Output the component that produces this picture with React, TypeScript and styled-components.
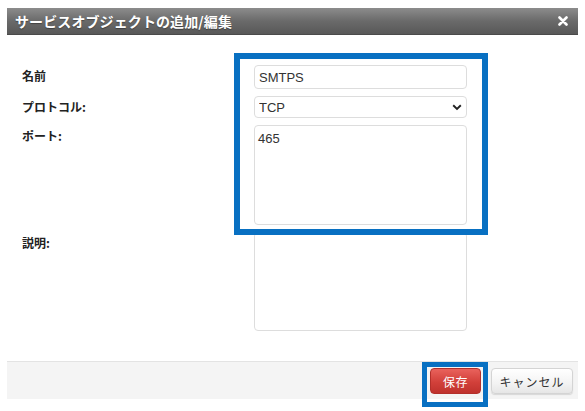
import styled, { createGlobalStyle } from 'styled-components';

const GlobalStyle = createGlobalStyle`
    body {
        margin: 0;
        min-height: 411px;
        background: #ffffff;
        font-family: 'Liberation Sans', Arial, 'Noto Sans CJK JP', sans-serif;
        color: #333333;
    }
    #root {
        min-height: 411px;
    }
`;

type FieldProps = {
    label: string;
    children: React.ReactNode;
};

const Field = ({ label, children }: FieldProps) => (
    <>
        <Label>{label}</Label>
        <Control>{children}</Control>
    </>
);

const App = () => {
    return (
        <>
            <GlobalStyle />
            <Dialog>
                <Header>
                    <h1>サービスオブジェクトの追加/編集</h1>
                    <CloseButton aria-label="close">
                        <svg width="10" height="10" viewBox="0 0 10 10">
                            <path
                                d="M1.5 1.5 L8.5 8.5 M8.5 1.5 L1.5 8.5"
                                stroke="#ffffff"
                                strokeWidth="2.6"
                                strokeLinecap="round"
                            />
                        </svg>
                    </CloseButton>
                </Header>
                <Body>
                    <Field label="名前">
                        <TextInput defaultValue="SMTPS" />
                    </Field>
                    <Field label="プロトコル:">
                        <SelectWrap>
                            <Select defaultValue="TCP">
                                <option>TCP</option>
                                <option>UDP</option>
                            </Select>
                            {/* chevron drawn on top of the select */}
                            <svg width="10" height="7" viewBox="0 0 10 7">
                                <path
                                    d="M1.2 1.3 L5 5 L8.8 1.3"
                                    fill="none"
                                    stroke="#222222"
                                    strokeWidth="1.9"
                                />
                            </svg>
                        </SelectWrap>
                    </Field>
                    <Field label="ポート:">
                        <TextArea $height={100} defaultValue="465" />
                    </Field>
                    <Field label="説明:">
                        <TextArea $height={99} defaultValue="" />
                    </Field>
                </Body>
                <Footer>
                    <Button $variant="primary" $width={51}>
                        保存
                    </Button>
                    <Button $variant="default" $width={82}>
                        キャンセル
                    </Button>
                </Footer>
                {/* annotation boxes */}
                <Highlight $left={227} $top={45} $width={254} $height={182} $border={6} />
                <Highlight $left={415} $top={354} $width={66} $height={45} $border={5} />
            </Dialog>
        </>
    );
};

const Dialog = styled.div`
    position: relative;
    width: 571px;
    margin: 8px 0 0 7px;
    background: #ffffff;
`;

const Header = styled.div`
    height: 27px;
    display: flex;
    align-items: center;
    justify-content: space-between;
    padding: 0 10px 0 8px;
    box-sizing: border-box;
    background: linear-gradient(#8c8c8c, #6a6a6a 50%, #585858);
    border-bottom: 1px solid #4a4a4a;
    > h1 {
        margin: 0;
        font-family: 'Noto Sans CJK JP', sans-serif;
        font-size: 14px;
        font-weight: bold;
        color: #ffffff;
        letter-spacing: 0.1px;
        text-shadow: 0 1px 1px rgba(0, 0, 0, 0.35);
    }
`;

const CloseButton = styled.span`
    display: flex;
    align-items: center;
`;

const Body = styled.div`
    display: grid;
    grid-template-columns: 247px 213px;
    row-gap: 7px;
    padding: 30px 0 30px 0;
`;

const Label = styled.div`
    padding: 2px 0 0 15px;
    font-family: 'Noto Sans CJK JP', sans-serif;
    font-size: 12px;
    font-weight: bold;
    color: #222222;
`;

const Control = styled.div`
    display: flex;
`;

const TextInput = styled.input`
    width: 100%;
    height: 24px;
    box-sizing: border-box;
    border: 1px solid #dddddd;
    border-radius: 4px;
    padding: 0 4px;
    font-family: 'Liberation Sans', Arial, sans-serif;
    font-size: 13px;
    color: #333333;
    outline: none;
`;

const SelectWrap = styled.div`
    position: relative;
    width: 100%;
    > svg {
        position: absolute;
        right: 5px;
        top: 8px;
        pointer-events: none;
    }
`;

const Select = styled.select`
    appearance: none;
    width: 100%;
    height: 22px;
    box-sizing: border-box;
    border: 1px solid #dddddd;
    border-radius: 4px;
    padding: 0 4px;
    background: #ffffff;
    font-family: 'Liberation Sans', Arial, sans-serif;
    font-size: 13px;
    color: #333333;
    outline: none;
`;

const TextArea = styled.textarea<{ $height: number }>`
    width: 100%;
    height: ${(p) => p.$height}px;
    box-sizing: border-box;
    border: 1px solid #dddddd;
    border-radius: 4px;
    padding: 5px 3px;
    resize: none;
    font-family: 'Liberation Sans', Arial, sans-serif;
    font-size: 13px;
    color: #333333;
    outline: none;
`;

const Footer = styled.div`
    height: 38px;
    box-sizing: border-box;
    display: flex;
    justify-content: flex-end;
    align-items: center;
    gap: 10px;
    padding: 0 5px 0 0;
    background: #f4f4f4;
    border-top: 1px solid #e3e3e3;
`;

const Button = styled.button<{ $variant: 'primary' | 'default'; $width: number }>`
    width: ${(p) => p.$width}px;
    height: 26px;
    box-sizing: border-box;
    border-radius: 4px;
    padding: 0;
    font-family: 'Noto Sans CJK JP', sans-serif;
    font-size: 12px;
    letter-spacing: ${(p) => (p.$variant === 'primary' ? '0.5px' : '1px')};
    cursor: pointer;
    color: ${(p) => (p.$variant === 'primary' ? '#ffffff' : '#333333')};
    border: 1px solid ${(p) => (p.$variant === 'primary' ? '#b3302b' : '#d4d4d4')};
    background: ${(p) =>
        p.$variant === 'primary'
            ? 'linear-gradient(#e9625c, #d2403a 55%, #bf322d)'
            : 'linear-gradient(#ffffff, #f3f3f3 60%, #e6e6e6)'};
    box-shadow: ${(p) =>
        p.$variant === 'primary'
            ? 'none'
            : '0 1px 1px rgba(0, 0, 0, 0.12)'};
    margin-top: 1px;
`;

const Highlight = styled.div<{
    $left: number;
    $top: number;
    $width: number;
    $height: number;
    $border: number;
}>`
    position: absolute;
    left: ${(p) => p.$left}px;
    top: ${(p) => p.$top}px;
    width: ${(p) => p.$width}px;
    height: ${(p) => p.$height}px;
    box-sizing: border-box;
    border: ${(p) => p.$border}px solid #0870c2;
    pointer-events: none;
`;

export default App;
